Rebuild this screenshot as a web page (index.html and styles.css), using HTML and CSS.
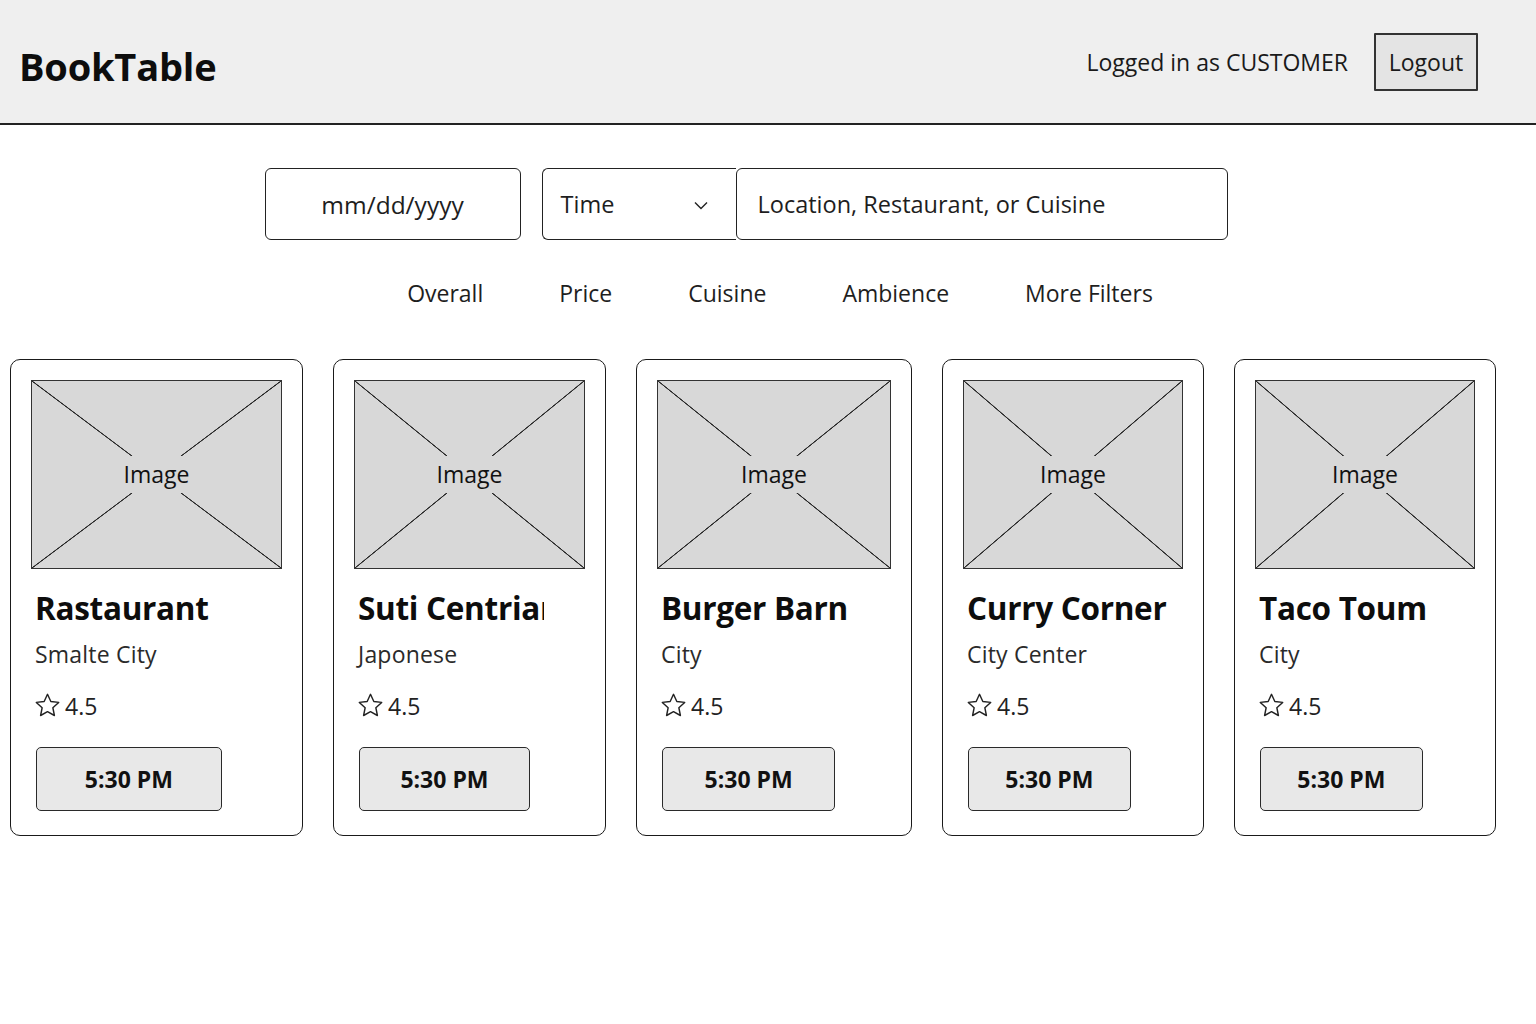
FILE: index.html
```html
<!DOCTYPE html>
<html lang="en">
<head>
<meta charset="utf-8">
<title>BookTable</title>
<link rel="stylesheet" href="styles.css">
</head>
<body>
<header class="topbar">
  <div class="brand">BookTable</div>
  <div class="account">
    <span class="who">Logged in as CUSTOMER</span>
    <button class="logout">Logout</button>
  </div>
</header>

<main>
  <section class="search">
    <div class="field date">mm/dd/yyyy</div>
    <div class="field time">
      <span>Time</span>
      <svg class="chev" width="14" height="9" viewBox="0 0 14 9"><polyline points="1,1.5 7,7.5 13,1.5" fill="none" stroke="#222" stroke-width="1.4"/></svg>
    </div>
    <div class="field where">Location, Restaurant, or Cuisine</div>
  </section>

  <nav class="filters">
    <span>Overall</span>
    <span>Price</span>
    <span>Cuisine</span>
    <span>Ambience</span>
    <span>More Filters</span>
  </nav>

  <section class="cards">
    <article class="card">
      <div class="ph"><span>Image</span></div>
      <h2 class="name">Rastaurant</h2>
      <div class="sub">Smalte City</div>
      <div class="rating"><svg class="star" width="25" height="25" viewBox="1.5 1.5 21 21"><path d="M12 2.6l2.8 6 6.6.8-4.9 4.5 1.3 6.5L12 17.2l-5.8 3.2 1.3-6.5-4.9-4.5 6.6-.8z" fill="none" stroke="#222" stroke-width="1.2" stroke-linejoin="round"/></svg><span>4.5</span></div>
      <button class="slot">5:30 PM</button>
    </article>
    <article class="card">
      <div class="ph"><span>Image</span></div>
      <h2 class="name clip">Suti Centriar</h2>
      <div class="sub">Japonese</div>
      <div class="rating"><svg class="star" width="25" height="25" viewBox="1.5 1.5 21 21"><path d="M12 2.6l2.8 6 6.6.8-4.9 4.5 1.3 6.5L12 17.2l-5.8 3.2 1.3-6.5-4.9-4.5 6.6-.8z" fill="none" stroke="#222" stroke-width="1.2" stroke-linejoin="round"/></svg><span>4.5</span></div>
      <button class="slot">5:30 PM</button>
    </article>
    <article class="card">
      <div class="ph"><span>Image</span></div>
      <h2 class="name">Burger Barn</h2>
      <div class="sub">City</div>
      <div class="rating"><svg class="star" width="25" height="25" viewBox="1.5 1.5 21 21"><path d="M12 2.6l2.8 6 6.6.8-4.9 4.5 1.3 6.5L12 17.2l-5.8 3.2 1.3-6.5-4.9-4.5 6.6-.8z" fill="none" stroke="#222" stroke-width="1.2" stroke-linejoin="round"/></svg><span>4.5</span></div>
      <button class="slot">5:30 PM</button>
    </article>
    <article class="card">
      <div class="ph"><span>Image</span></div>
      <h2 class="name">Curry Corner</h2>
      <div class="sub">City Center</div>
      <div class="rating"><svg class="star" width="25" height="25" viewBox="1.5 1.5 21 21"><path d="M12 2.6l2.8 6 6.6.8-4.9 4.5 1.3 6.5L12 17.2l-5.8 3.2 1.3-6.5-4.9-4.5 6.6-.8z" fill="none" stroke="#222" stroke-width="1.2" stroke-linejoin="round"/></svg><span>4.5</span></div>
      <button class="slot">5:30 PM</button>
    </article>
    <article class="card">
      <div class="ph"><span>Image</span></div>
      <h2 class="name">Taco Toum</h2>
      <div class="sub">City</div>
      <div class="rating"><svg class="star" width="25" height="25" viewBox="1.5 1.5 21 21"><path d="M12 2.6l2.8 6 6.6.8-4.9 4.5 1.3 6.5L12 17.2l-5.8 3.2 1.3-6.5-4.9-4.5 6.6-.8z" fill="none" stroke="#222" stroke-width="1.2" stroke-linejoin="round"/></svg><span>4.5</span></div>
      <button class="slot">5:30 PM</button>
    </article>
  </section>
</main>
</body>
</html>
```

FILE: styles.css
```css
* { box-sizing: border-box; }

html, body {
  margin: 0;
  padding: 0;
  background: #ffffff;
  color: #111;
  font-family: "Open Sans", "Noto Sans", "DejaVu Sans", sans-serif;
}

.topbar {
  height: 125px;
  background: #efefef;
  border-bottom: 2px solid #222;
  display: flex;
  align-items: center;
  justify-content: space-between;
  padding: 0 58px 0 19px;
}

.brand {
  font-size: 38px;
  font-weight: 700;
  color: #0d0d0d;
  padding-top: 8px;
  letter-spacing: -0.2px;
}

.account {
  display: flex;
  align-items: center;
  gap: 26px;
}

.who {
  font-size: 23px;
  color: #1a1a1a;
}

.logout {
  width: 104px;
  height: 58px;
  background: #e4e4e4;
  border: 2px solid #333;
  border-radius: 1px;
  font-family: inherit;
  font-size: 23px;
  color: #1a1a1a;
  padding: 0;
}

.search {
  margin-top: 43px;
  display: flex;
  justify-content: center;
  padding-right: 44px;
}

.field {
  height: 72px;
  border: 1.5px solid #222;
  display: flex;
  align-items: center;
  font-size: 23.5px;
  color: #1e1e1e;
}

.date {
  width: 256px;
  border-radius: 6px;
  justify-content: center;
  margin-right: 21px;
  font-size: 24.5px;
}

.time {
  width: 194px;
  border-right: none;
  border-radius: 6px 0 0 6px;
  justify-content: space-between;
  padding: 0 28px 0 18px;
}

.chev { margin-top: 2px; }

.where {
  width: 492px;
  border-radius: 6px;
  padding-left: 21px;
}

.filters {
  margin-top: 37px;
  display: flex;
  justify-content: center;
  gap: 76px;
  padding-left: 24px;
  font-size: 23px;
  line-height: 32px;
  color: #1e1e1e;
}

.cards {
  margin-top: 50px;
  padding-left: 10px;
  display: grid;
  grid-template-columns: 293px 273px 276px 262px 262px;
  column-gap: 30px;
  align-items: start;
}

.card {
  height: 477px;
  border: 1.5px solid #1a1a1a;
  border-radius: 10px;
  padding: 20px 20px 0 20px;
  display: flex;
  flex-direction: column;
  background: #fff;
}

.ph {
  height: 189px;
  background-color: #d8d8d8;
  background-image:
    linear-gradient(to top right, transparent calc(50% - 0.8px), #2a2a2a calc(50% - 0.3px), #2a2a2a calc(50% + 0.3px), transparent calc(50% + 0.8px)),
    linear-gradient(to bottom right, transparent calc(50% - 0.8px), #2a2a2a calc(50% - 0.3px), #2a2a2a calc(50% + 0.3px), transparent calc(50% + 0.8px));
  border: 1.5px solid #333;
  display: flex;
  align-items: center;
  justify-content: center;
}

.ph span {
  background: #d8d8d8;
  font-size: 23px;
  line-height: 37px;
  padding: 0 1px;
  color: #111;
}

.name {
  margin: 19px 0 0 4px;
  font-size: 31.5px;
  line-height: 40px;
  font-weight: 700;
  color: #0d0d0d;
  white-space: nowrap;
  letter-spacing: -0.3px;
}

.clip {
  width: 186px;
  overflow: hidden;
}

.sub {
  margin: 10px 0 0 4px;
  font-size: 23px;
  line-height: 32px;
  color: #2a2a2a;
  letter-spacing: 0.2px;
}

.rating {
  margin: 20px 0 0 4px;
  display: flex;
  align-items: center;
  gap: 5px;
  font-size: 23px;
  line-height: 32px;
  color: #222;
}

.star { margin-top: -2px; }

.slot {
  margin: 25px 0 0 5px;
  width: 74%;
  height: 64px;
  background: #e8e8e8;
  border: 1.5px solid #2a2a2a;
  border-radius: 5px;
  font-family: inherit;
  font-size: 23px;
  font-weight: 700;
  color: #111;
  padding: 0;
}
```
